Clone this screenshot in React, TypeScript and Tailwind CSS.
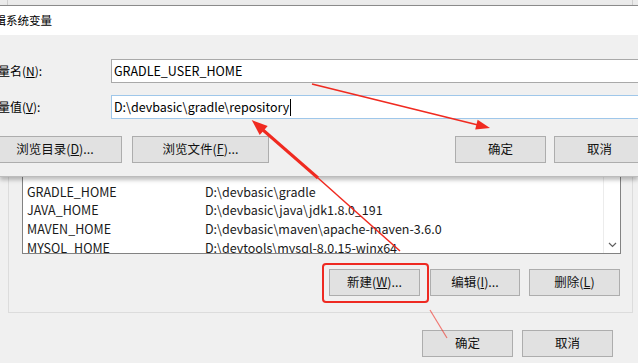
const font = { fontFamily: '"Noto Sans CJK SC", "Noto Sans", sans-serif' };

const Btn = ({ label, className = '' }: { label: React.ReactNode; className?: string }) => (
  <div
    className={`h-[27px] flex items-center justify-center bg-[#e1e1e1] border border-[#adadad] text-[12.5px] text-[#111] shrink-0 ${className}`}
  >
    {label}
  </div>
);

const rows = [
  ['GRADLE_HOME', 'D:\\devbasic\\gradle'],
  ['JAVA_HOME', 'D:\\devbasic\\java\\jdk1.8.0_191'],
  ['MAVEN_HOME', 'D:\\devbasic\\maven\\apache-maven-3.6.0'],
  ['MYSQL_HOME', 'D:\\devtools\\mysql-8.0.15-winx64'],
];

export default function App() {
  return (
    <div className="relative w-[638px] h-[363px] overflow-hidden bg-[#f0f0f0]" style={font}>
      {/* edge of the dialog behind */}
      <div className="h-[5px] bg-[#ebebeb] flex">
        <div className="w-[8px] border-r border-[#cfcfcf]" />
        <div className="flex-1" />
        <div className="w-[6px] border-l border-[#cfcfcf]" />
      </div>

      {/* edit dialog on top */}
      <div className="relative z-10 border-t border-[#8a8a8a] border-b border-b-[#bcbcbc] shadow-[0_3px_4px_rgba(0,0,0,0.25)]">
        <div className="h-[29px] bg-white flex items-center">
          <span className="ml-[-17px] text-[11.5px] text-black">编辑系统变量</span>
        </div>
        <div className="bg-[#f0f0f0] h-[141px] pt-[24px]">
          <div className="flex items-center h-[24px]">
            <span className="ml-[-14px] w-[125px] text-[12px] text-black">
              变量名(<span className="underline">N</span>):
            </span>
            <div className="flex-1 mr-[-10px] h-[24px] bg-white border border-[#a9a9a9] flex items-center pl-[2px] text-[12.5px] text-black">
              GRADLE_USER_HOME
            </div>
          </div>
          <div className="flex items-center h-[24px] mt-[12px]">
            <span className="ml-[-14px] w-[125px] text-[12px] text-black">
              变量值(<span className="underline">V</span>):
            </span>
            <div className="flex-1 mr-[-10px] h-[24px] bg-white border border-[#9fc7ea] flex items-center pl-[2px] text-[12.5px] text-black">
              D:\devbasic\gradle\repository
              <span className="w-px h-[17px] bg-black ml-[1px]" />
            </div>
          </div>
          <div className="flex items-center mt-[17px]">
            <Btn className="ml-[-12px] w-[134px]" label={<>浏览目录(<span className="underline">D</span>)...</>} />
            <Btn className="ml-[10px] w-[137px]" label={<>浏览文件(<span className="underline">F</span>)...</>} />
            <Btn className="ml-[186px] w-[91px]" label="确定" />
            <Btn className="ml-[8px] w-[91px]" label="取消" />
          </div>
        </div>
      </div>

      {/* environment variables dialog behind */}
      <div className="mt-[-24px]">
        <div className="ml-[8px] w-[625px] border-x border-b border-[#dcdcdc] pb-[16px]">
          <div className="ml-[13px] w-[599px] h-[101px] bg-white border border-[#828282] flex overflow-hidden">
            <div className="flex-1 pt-[28.67px] text-[12.5px] text-[#1a1a1a]">
              {rows.map(([k, v]) => (
                <div key={k} className="flex h-[18.67px] items-center">
                  <span className="pl-[4px] w-[182px] shrink-0">{k}</span>
                  <span className="whitespace-nowrap">{v}</span>
                </div>
              ))}
            </div>
            <div className="w-[17px] border-l border-[#ececec] bg-white flex flex-col justify-end items-center pb-[5px]">
              <svg width="9" height="6" viewBox="0 0 9 6">
                <path d="M1 1 L4.5 4.5 L8 1" fill="none" stroke="#606060" strokeWidth="1.2" />
              </svg>
            </div>
          </div>
          <div className="flex justify-end mt-[15px] pr-[12px]">
            <Btn className="w-[91px]" label={<>新建(<span className="underline">W</span>)...</>} />
            <Btn className="ml-[10px] w-[90px]" label={<>编辑(<span className="underline">I</span>)...</>} />
            <Btn className="ml-[9px] w-[91px]" label={<>删除(<span className="underline">L</span>)</>} />
          </div>
        </div>
        <div className="flex justify-end mt-[17px] pr-[25px]">
          <Btn className="w-[91px]" label="确定" />
          <Btn className="ml-[9px] w-[91px]" label="取消" />
        </div>
      </div>

      {/* red annotations */}
      <svg className="absolute inset-0 z-20 pointer-events-none" width="638" height="363" viewBox="0 0 638 363">
        <rect x="323" y="264" width="105" height="38" rx="3" fill="none" stroke="#ee2a22" strokeWidth="2" />
        <line x1="312" y1="84" x2="478" y2="125" stroke="#f02a20" strokeWidth="1.8" />
        <polygon points="490,128 475.2,129.5 477.6,119.7" fill="#f02a20" />
        <line x1="263" y1="130" x2="318" y2="178" stroke="#f02a20" strokeWidth="3" />
        <line x1="318" y1="178" x2="400" y2="251" stroke="#f02a20" strokeWidth="1.5" />
        <line x1="430" y1="310" x2="447" y2="338" stroke="#f02a20" strokeWidth="1.2" opacity="0.6" />
        <polygon points="251.7,120 267.7,126.1 259.7,135.1" fill="#f02a20" />
      </svg>
    </div>
  );
}
